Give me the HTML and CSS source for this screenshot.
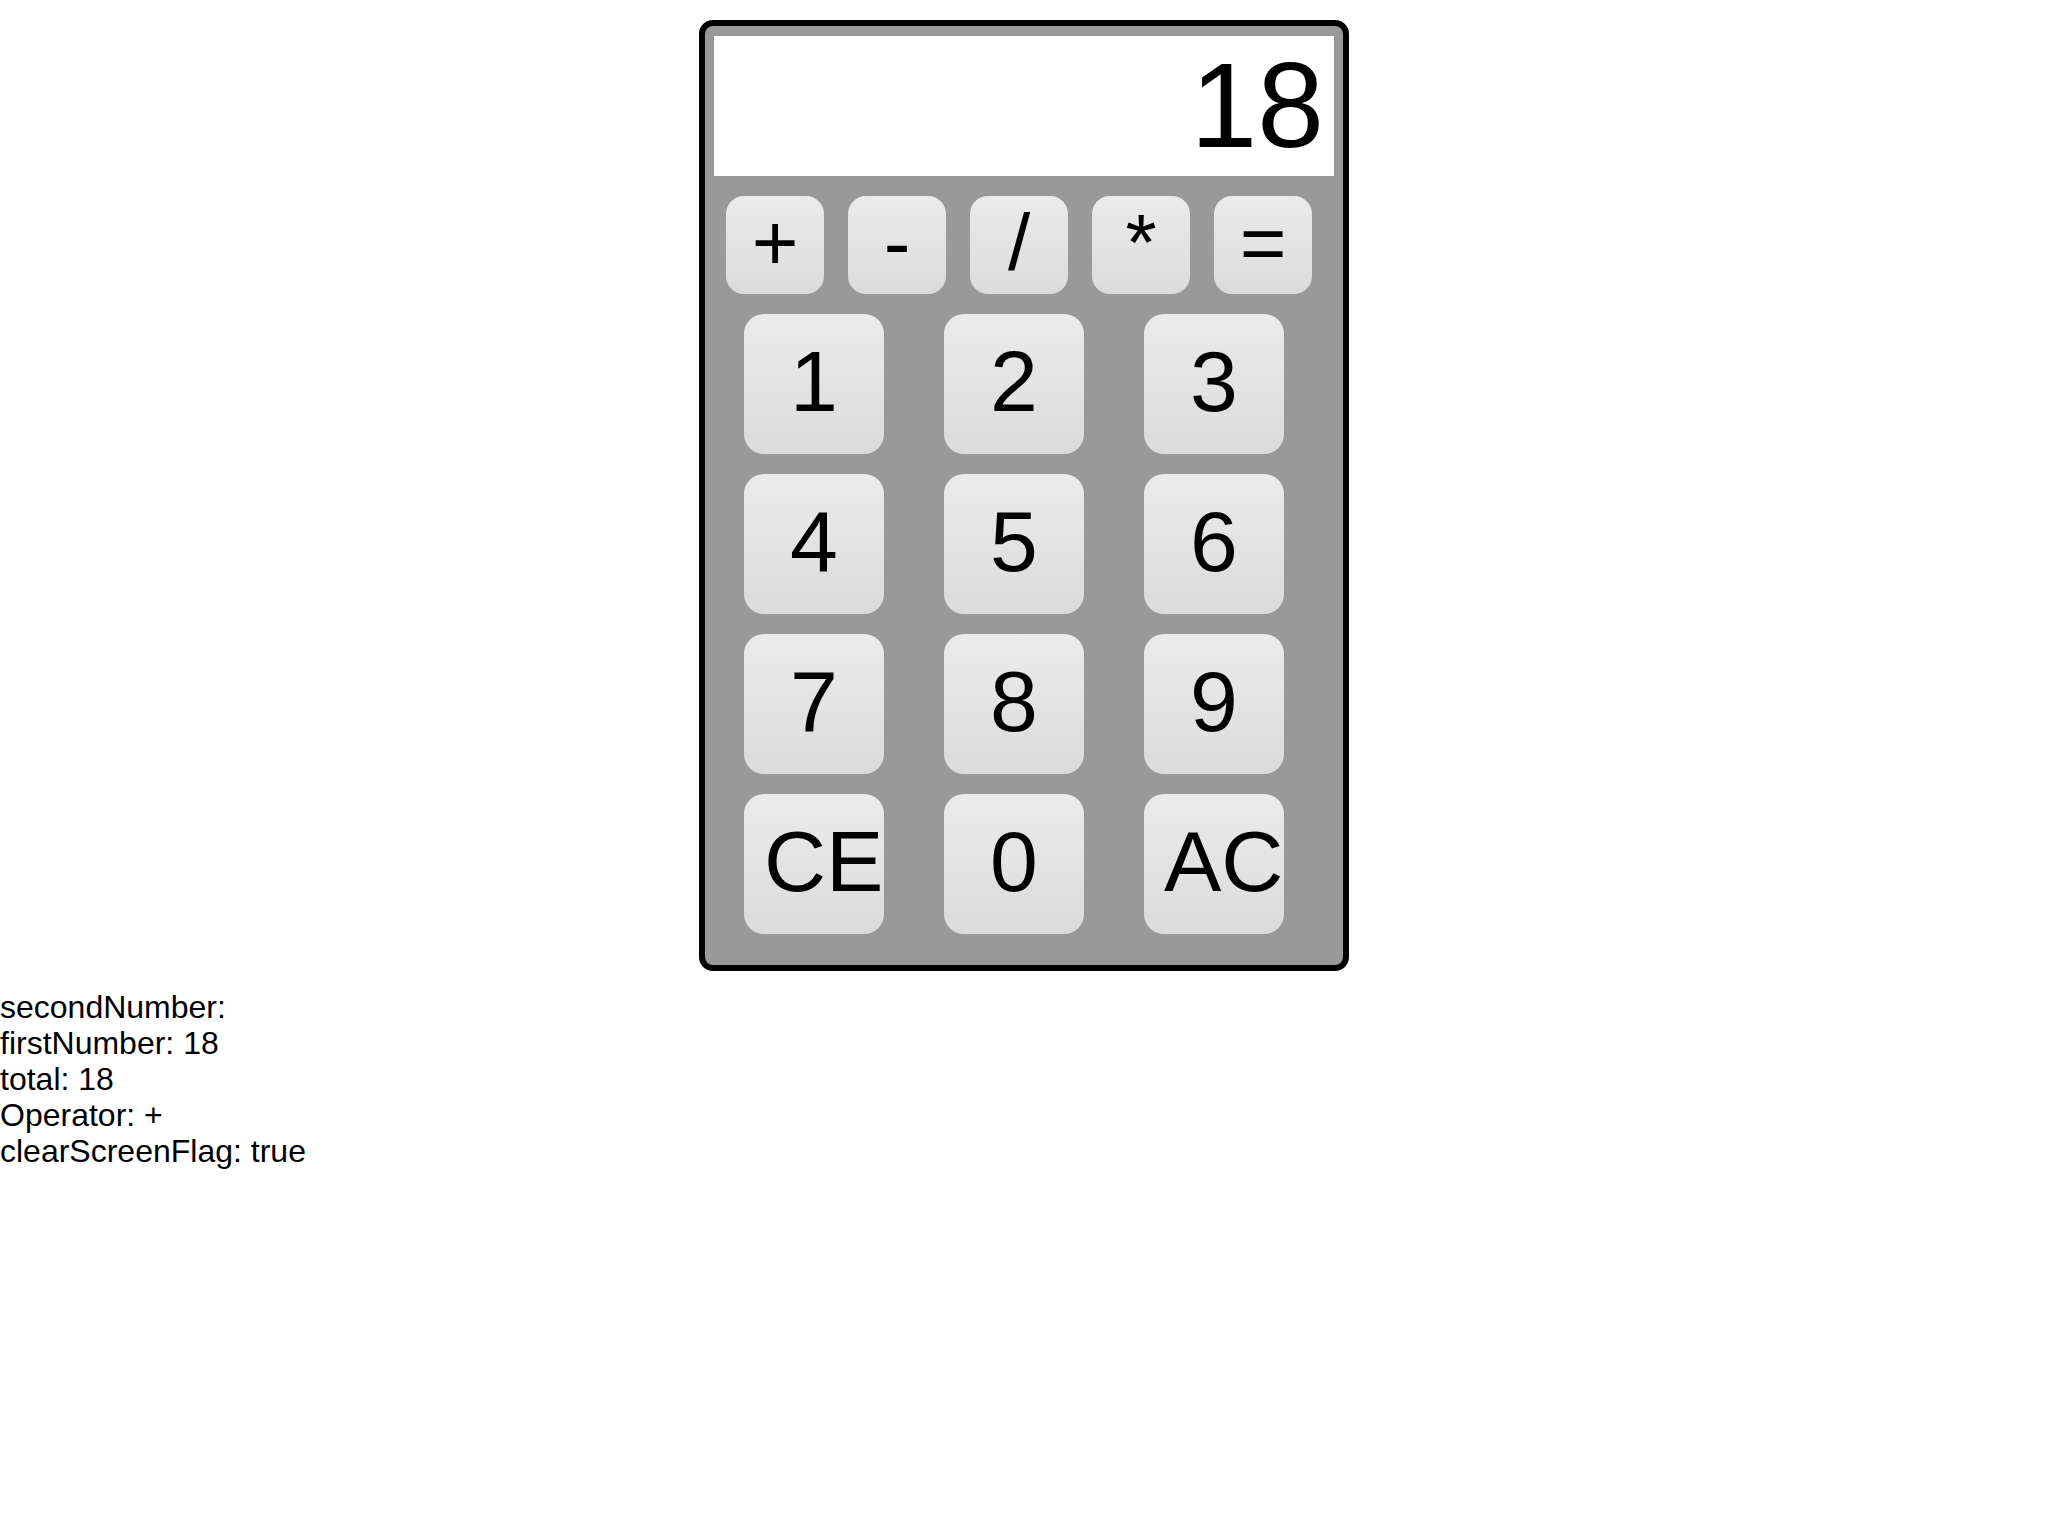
FILE: index.html
```html
<!DOCTYPE html>
<html>
<head>
<meta charset="utf-8">
<title>Calculator</title>
<link rel="stylesheet" href="styles.css">
</head>
<body>
<div class="calc">
  <div class="display">18</div>
  <div class="ops">
    <button class="op">+</button>
    <button class="op">-</button>
    <button class="op">/</button>
    <button class="op">*</button>
    <button class="op">=</button>
  </div>
  <div class="nums">
    <button class="num">1</button>
    <button class="num">2</button>
    <button class="num">3</button>
    <button class="num">4</button>
    <button class="num">5</button>
    <button class="num">6</button>
    <button class="num">7</button>
    <button class="num">8</button>
    <button class="num">9</button>
    <button class="num">CE</button>
    <button class="num">0</button>
    <button class="num">AC</button>
  </div>
</div>
<div class="debug">
  <div>secondNumber:</div>
  <div>firstNumber: 18</div>
  <div>total: 18</div>
  <div>Operator: +</div>
  <div>clearScreenFlag: true</div>
</div>
</body>
</html>
```

FILE: styles.css
```css
html, body {
  margin: 0;
  padding: 0;
  background: #ffffff;
  font-family: "Liberation Sans", Arial, sans-serif;
  color: #000;
}

.calc {
  width: 620px;
  margin: 20px auto 0;
  padding: 10px 9px 31px 9px;
  border: 6px solid #000;
  border-radius: 14px;
  background: #999999;
}

.display {
  height: 140px;
  background: #ffffff;
  font-size: 120px;
  line-height: 138px;
  text-align: right;
  padding-right: 10px;
  box-sizing: border-box;
  overflow: hidden;
}

.ops {
  display: flex;
  gap: 24px;
  padding: 0 12px;
  margin-top: 20px;
}

.nums {
  display: grid;
  grid-template-columns: repeat(3, 140px);
  column-gap: 60px;
  row-gap: 20px;
  padding-left: 30px;
  margin-top: 20px;
}

.op, .num {
  font-family: "Liberation Sans", Arial, sans-serif;
  color: #000;
  border: none;
  margin: 0;
  background: linear-gradient(#ebebeb, #dbdbdb);
  text-align: center;
  overflow: visible;
  white-space: nowrap;
  box-sizing: border-box;
}

.op {
  width: 98px;
  height: 98px;
  border-radius: 18px;
  padding: 0 0 5px 0;
  font-size: 80px;
  line-height: 92px;
}

.num {
  width: 140px;
  height: 140px;
  border-radius: 20px;
  padding: 0 20px 6px 20px;
  font-size: 86px;
  line-height: 98px;
}

.debug {
  margin-top: 18px;
  font-size: 32px;
  line-height: 36px;
}
```
